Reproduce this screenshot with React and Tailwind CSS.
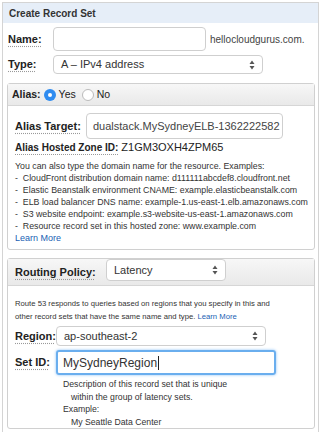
import React from 'react';

const font = { fontFamily: '"Liberation Sans", Arial, sans-serif' };

function Label({ children, className = '' }) {
  return (
    <span className={`font-bold text-[#222] underline decoration-dotted decoration-[#999] underline-offset-[3px] ${className}`}>
      {children}
    </span>
  );
}

function Arrows() {
  return (
    <svg width="6" height="10" viewBox="0 0 6 10" className="shrink-0">
      <path d="M3 0.5 L5.5 4 L0.5 4 Z" fill="#555" />
      <path d="M3 9.5 L5.5 6 L0.5 6 Z" fill="#555" />
    </svg>
  );
}

function Select({ value, className = '' }) {
  return (
    <div className={`flex items-center justify-between rounded-[4px] border border-[#cfcfcf] bg-white pl-[7px] pr-[7px] text-[11px] text-[#333] ${className}`}>
      <span>{value}</span>
      <Arrows />
    </div>
  );
}

function App() {
  return (
    <div className="w-[322px] h-[432px] bg-white overflow-hidden" style={font}>
      <div className="ml-[2px] mt-[2px] w-[317px] h-[440px] border-l border-t border-r border-[#d4d4d4]">
        {/* Header */}
        <div className="flex h-[20px] items-center bg-[#e6eef8] px-[6px] text-[10px] font-bold text-[#333]">
          Create Record Set
        </div>

        {/* Name */}
        <div className="mt-[4px] flex items-center">
          <Label className="ml-[5px] w-[45px] text-[11px]">Name:</Label>
          <div className="h-[24px] w-[153px] rounded-[4px] border border-[#cfcfcf]" />
          <span className="ml-[4px] text-[10px] text-[#444]">hellocloudgurus.com.</span>
        </div>

        {/* Type */}
        <div className="mt-[4px] flex items-center">
          <Label className="ml-[5px] w-[45px] text-[11px]">Type:</Label>
          <Select value="A – IPv4 address" className="h-[19px] w-[210px]" />
        </div>

        {/* Alias box */}
        <div className="ml-[4px] mt-[9px] w-[308px] h-[167px] rounded-[3px] border border-[#d0d0d0]">
          <div className="flex h-[22px] items-center gap-[3px] border-b border-[#d6d6d6] bg-gradient-to-b from-[#f7f7f7] to-[#e9e9e9] px-[4px] text-[10.5px] text-[#222]">
            <span className="font-bold">Alias:</span>
            <span className="flex h-[12px] w-[12px] items-center justify-center rounded-full bg-[#2f8cf0]">
              <span className="h-[4px] w-[4px] rounded-full bg-white" />
            </span>
            <span>Yes</span>
            <span className="ml-[3px] h-[12px] w-[12px] rounded-full border border-[#bbb] bg-white" />
            <span>No</span>
          </div>

          <div className="px-[7px]">
            <div className="mt-[7px] flex items-center">
              <Label className="w-[71px] text-[11px]">Alias Target:</Label>
              <div className="flex h-[26px] w-[197px] items-center overflow-hidden whitespace-nowrap rounded-[4px] border border-[#cfcfcf] pl-[6px] text-[11px] text-[#444]">
                dualstack.MySydneyELB-1362222582
              </div>
            </div>
            <div className="mt-[1px] flex items-baseline gap-[3px] leading-[14px] text-[#222]">
              <Label className="text-[10px]">Alias Hosted Zone ID:</Label>
              <span className="text-[11px]">Z1GM3OXH4ZPM65</span>
            </div>
            <div className="mt-[5px] text-[8.8px] leading-[12px] text-[#333] whitespace-nowrap">
              <div>You can also type the domain name for the resource. Examples:</div>
              <div>- &nbsp;CloudFront distribution domain name: d111111abcdef8.cloudfront.net</div>
              <div>- &nbsp;Elastic Beanstalk environment CNAME: example.elasticbeanstalk.com</div>
              <div>- &nbsp;ELB load balancer DNS name: example-1.us-east-1.elb.amazonaws.com</div>
              <div>- &nbsp;S3 website endpoint: example.s3-website-us-east-1.amazonaws.com</div>
              <div>- &nbsp;Resource record set in this hosted zone: www.example.com</div>
              <div className="text-[9px] text-[#1a5fb4]">Learn More</div>
            </div>
          </div>
        </div>

        {/* Routing box */}
        <div className="ml-[4px] mt-[8px] w-[308px] h-[171px] rounded-[3px] border border-[#d0d0d0]">
          <div className="flex h-[27px] items-center border-b border-[#d6d6d6] bg-gradient-to-b from-[#f7f7f7] to-[#e9e9e9] px-[7px]">
            <Label className="w-[91px] text-[11px]">Routing Policy:</Label>
            <Select value="Latency" className="h-[22px] w-[120px] -mt-[4px]" />
          </div>

          <div className="px-[7px]">
            <div className="mt-[11px] text-[7.7px] leading-[13px] text-[#333] whitespace-nowrap">
              Route 53 responds to queries based on regions that you specify in this and
              <br />
              other record sets that have the same name and type.{' '}
              <span className="text-[#1a5fb4]">Learn More</span>
            </div>

            <div className="mt-[3px] flex items-center">
              <Label className="w-[41px] text-[11px]">Region:</Label>
              <Select value="ap-southeast-2" className="h-[20px] w-[210px]" />
            </div>

            <div className="mt-[4px] flex items-center">
              <Label className="w-[41px] text-[11px]">Set ID:</Label>
              <div className="flex h-[25px] w-[220px] items-center rounded-[3px] border-2 border-[#6aaeee] pl-[5px] text-[12px] text-[#333] shadow-[0_0_3px_#8cc0f5]">
                MySydneyRegion<span className="ml-[1px] h-[14px] w-px bg-[#222]" />
              </div>
            </div>

            <div className="ml-[48px] mt-[3px] text-[8.7px] leading-[12.5px] text-[#333]">
              <div>Description of this record set that is unique</div>
              <div className="pl-[8px]">within the group of latency sets.</div>
              <div>Example:</div>
              <div className="pl-[8px]">My Seattle Data Center</div>
            </div>
          </div>
        </div>
      </div>
    </div>
  );
}

export default App;
